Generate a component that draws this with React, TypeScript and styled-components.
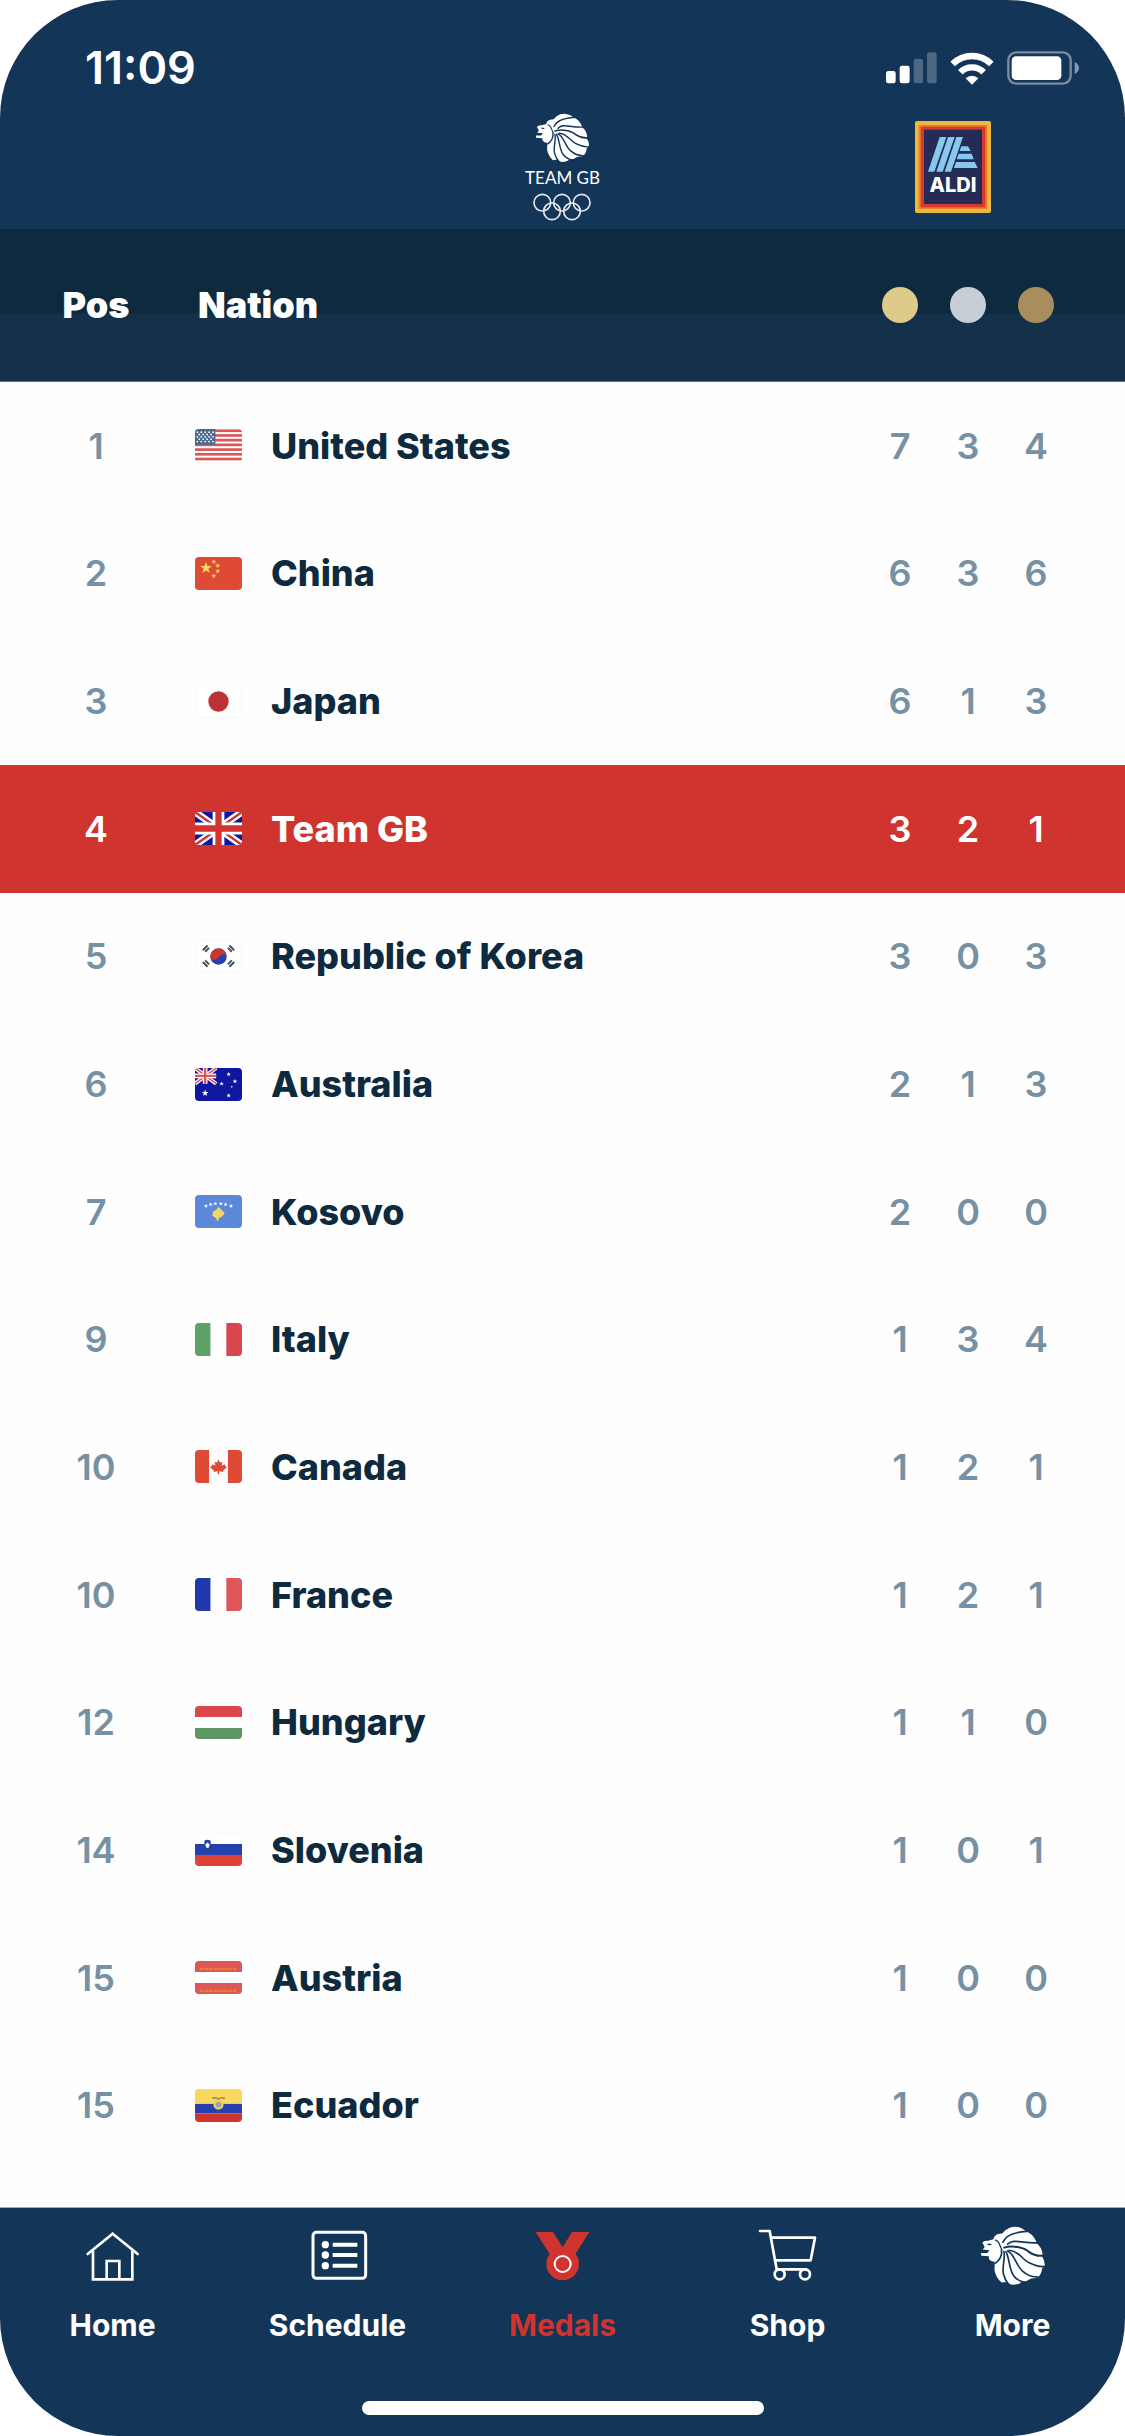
import React from "react";
import styled, { createGlobalStyle } from "styled-components";

const color = {
  navy: "#133558",
  ink: "#0d2a3f",
  inkLight: "#153149",
  slate: "#7691a3",
  red: "#d0342f",
  white: "#ffffff",
};

const GlobalStyle = createGlobalStyle`
  *, *::before, *::after { box-sizing: border-box; }
  body {
    margin: 0;
    background: ${color.white};
    font-family: Inter, "Liberation Sans", sans-serif;
  }
`;

const Screen = styled.main`
  display: flex;
  flex-direction: column;
  min-height: 100vh;
  overflow: hidden;
  border-radius: 118px;
  background: #fefefe;
`;

const TopBar = styled.header`
  background: ${color.navy};
  color: ${color.white};
`;

const StatusBar = styled.div`
  display: flex;
  align-items: center;
  justify-content: space-between;
  height: 112px;
  padding: 24px 46px 0 85px;
`;

const Clock = styled.time`
  font-size: 45px;
  line-height: 48px;
  font-weight: 600;
`;

const StatusIcons = styled.div`
  display: flex;
  align-items: center;
  gap: 13px;
`;

const BrandBar = styled.div`
  display: grid;
  grid-template-columns: 1fr auto 1fr;
  align-items: center;
  height: 117px;
  padding: 0 0 8px;
`;

const TeamLogo = styled.div`
  display: flex;
  flex-direction: column;
  align-items: center;
  grid-column: 2;
`;

const TeamName = styled.span`
  font-family: Lato, sans-serif;
  font-size: 17px;
  line-height: 30px;
`;

const SponsorLink = styled.a`
  display: block;
  justify-self: end;
  height: 92px;
  margin-right: 134px;
`;

const Table = styled.table`
  display: flex;
  flex: 1;
  flex-direction: column;
  padding-bottom: 38px;
`;

const TableHead = styled.thead`
  display: block;
  border-bottom: 1px solid #5d7183;
  background: linear-gradient(${color.ink} 56%, ${color.inkLight} 56%);
  color: ${color.white};
`;

const TableBody = styled.tbody`
  display: grid;
  flex: 1;
  grid-auto-rows: 1fr;
`;

const Row = styled.tr<{ $active?: boolean }>`
  display: grid;
  grid-template-columns: 192px 1fr repeat(3, 68px);
  align-items: center;
  min-height: 120px;
  padding-right: 55px;
  background: ${(p) => (p.$active ? color.red : "transparent")};
  color: ${(p) => (p.$active ? color.white : color.slate)};
`;

const HeadRow = styled(Row)`
  min-height: 152px;
  color: ${color.white};
`;

const Cell = styled.td`
  padding: 0;
  font-size: 36px;
  line-height: 44px;
  font-weight: 600;
  text-align: center;
`;

const NationCell = styled.th<{ $active?: boolean }>`
  display: flex;
  align-items: center;
  gap: 29px;
  padding: 0 0 0 3px;
  color: ${(p) => (p.$active ? color.white : color.ink)};
  font-size: 36px;
  line-height: 44px;
  font-weight: 800;
  text-align: left;
`;

const HeadCell = styled.th<{ $left?: boolean }>`
  padding: 0 0 0 ${(p) => (p.$left ? "6px" : "0")};
  font-size: 36px;
  line-height: 44px;
  font-weight: 900;
  text-align: ${(p) => (p.$left ? "left" : "center")};
`;

const MedalDot = styled.span<{ $fill: string }>`
  display: block;
  width: 36px;
  height: 36px;
  margin: 0 auto;
  border-radius: 50%;
  background: ${(p) => p.$fill};
`;

const FlagSvg = styled.svg`
  display: block;
  flex: none;
  width: 47px;
  height: 33px;
  border-radius: 4px;
`;

const NavBar = styled.nav`
  display: flex;
  flex-direction: column;
  align-items: center;
  justify-content: space-between;
  min-height: 229px;
  padding: 18px 0 21px;
  border-top: 1px solid #9fadba;
  background: ${color.navy};
`;

const Tabs = styled.div`
  display: grid;
  grid-template-columns: repeat(5, 1fr);
  width: 100%;
`;

const Tab = styled.a<{ $active?: boolean }>`
  display: flex;
  flex-direction: column;
  align-items: center;
  gap: 19px;
  color: ${(p) => (p.$active ? color.red : color.white)};
  font-size: 30px;
  line-height: 40px;
  font-weight: 700;
  text-decoration: none;
`;

const HomeIndicator = styled.div`
  width: 402px;
  height: 14px;
  border-radius: 7px;
  background: ${color.white};
`;

function Lion({ width, height }: { width: number; height: number }) {
  return (
    <svg width={width} height={height} viewBox="20 16 196 178" aria-hidden="true">
      <path
        fill="#fff"
        d="M27 66 Q32 58 44 60 L60 55 Q62 44 74 40 L86 38 Q94 26 110 20 Q130 15 146 24 L158 32 Q176 40 184 56 L189 68 Q202 78 206 98 L204 106 Q214 120 212 136 L204 142 Q204 158 190 170 L172 172 Q158 182 144 182 Q132 192 112 190 L98 182 L84 184 Q66 168 63 146 L64 122 Q52 122 47 114 L46 106 L24 104 L23 96 L42 96 L48 88 L28 86 L34 78 Z"
      />
      <g fill="none" stroke={color.navy} strokeLinecap="round">
        <path strokeWidth="5" d="M88 64 C96 46 122 34 160 32" />
        <path strokeWidth="5" d="M102 70 C122 52 140 68 192 66" />
        <path strokeWidth="6" d="M92 80 C120 70 156 84 164 92 C178 102 194 106 208 104" />
        <path strokeWidth="5" d="M106 88 C138 90 146 118 168 126 C184 134 200 138 212 136" />
        <path strokeWidth="5" d="M102 90 C124 100 126 132 146 150 C160 162 176 168 192 168" />
        <path strokeWidth="5" d="M97 92 C108 112 106 144 120 164 C130 176 142 182 154 184" />
        <path strokeWidth="5" d="M91 92 C96 112 84 138 90 160 C93 172 98 180 104 188" />
        <path strokeWidth="5" d="M84 86 C86 104 80 116 66 126" />
        <path strokeWidth="4" d="M66 58 C76 60 78 72 84 84" />
        <path strokeWidth="4" d="M44 70 L52 71" />
      </g>
    </svg>
  );
}

function Rings() {
  return (
    <svg width="58" height="28" viewBox="0 0 174 84" fill="none" stroke="#e6ebf0" strokeWidth="5" aria-hidden="true">
      <circle cx="28" cy="29" r="25" />
      <circle cx="87" cy="29" r="25" />
      <circle cx="146" cy="29" r="25" />
      <circle cx="57" cy="55" r="25" />
      <circle cx="117" cy="55" r="25" />
    </svg>
  );
}

function AldiLogo() {
  return (
    <svg width="76" height="92" viewBox="0 0 228 276" role="img" aria-label="ALDI">
      <rect width="228" height="276" rx="6" fill="#efb73e" />
      <rect x="11" y="12" width="206" height="252" fill="#e8812f" />
      <rect x="17" y="17" width="194" height="242" fill="#d93a2e" />
      <rect x="27" y="26" width="174" height="223" fill="#242b54" />
      <g fill="#86c8ee">
        <path d="M74 48 h20 L58 152 h-19 Z" />
        <path d="M99 48 h20 L83 152 h-19 Z" />
        <path d="M124 48 h20 L108 152 h-19 Z" />
        <path d="M139 76 h20 l8 14 h-33 Z" />
        <path d="M131 98 h39 l6 17 h-51 Z" />
        <path d="M123 123 h56 l9 18 h-71 Z" />
      </g>
      <text x="114" y="212" fill="#fff" fontFamily="Inter, sans-serif" fontSize="60" fontWeight="800" textAnchor="middle">
        ALDI
      </text>
    </svg>
  );
}

function SignalIcon() {
  return (
    <svg width="51" height="32" viewBox="0 0 153 96" fill="#fff" aria-hidden="true">
      <rect x="0" y="57" width="29" height="37" rx="7" />
      <rect x="41" y="41" width="30" height="53" rx="7" />
      <rect x="83" y="20" width="28" height="74" rx="7" opacity="0.25" />
      <rect x="123" y="1" width="29" height="93" rx="7" opacity="0.25" />
    </svg>
  );
}

function WifiIcon() {
  return (
    <svg width="44" height="33" viewBox="0 0 132 99" aria-hidden="true">
      <g fill="none" stroke="#fff" strokeWidth="19">
        <path d="M8 36 A82 82 0 0 1 124 36" />
        <path d="M31 61 A49 49 0 0 1 101 61" />
      </g>
      <path fill="#fff" d="M66 98 L47 79 A27 27 0 0 1 85 79 Z" />
    </svg>
  );
}

function BatteryIcon() {
  return (
    <svg width="72" height="34" viewBox="0 0 216 102" aria-hidden="true">
      <rect x="4" y="4" width="187" height="94" rx="24" fill="none" stroke="#7b8da2" strokeWidth="7" />
      <rect x="14" y="16" width="149" height="71" rx="13" fill="#fff" />
      <path d="M203 33 Q216 40 216 51 Q216 62 203 69 Z" fill="#8796a9" />
    </svg>
  );
}

const navIcons: Record<string, React.ReactNode> = {
  Home: (
    <g fill="none" stroke="#fff" strokeWidth="8" strokeLinecap="round">
      <path d="M20 84 L95 23 L170 84" />
      <path d="M36 74 V160 H154 V74" strokeLinecap="butt" />
      <path d="M77 160 V105 H115 V160" strokeLinecap="butt" />
    </g>
  ),
  Schedule: (
    <g fill="none" stroke="#fff">
      <rect x="21" y="19" width="158" height="138" rx="10" strokeWidth="9" />
      <path d="M80 56 H154 M80 87 H154 M80 119 H154" strokeWidth="12" />
      <g fill="#fff" stroke="none">
        <circle cx="58" cy="56" r="11" />
        <circle cx="58" cy="87" r="11" />
        <circle cx="58" cy="119" r="11" />
      </g>
    </g>
  ),
  Medals: (
    <g fill={color.red}>
      <path d="M14 18 H66 L95 64 L123 18 H175 L128 92 H61 Z" />
      <circle cx="95" cy="114" r="49" />
      <circle cx="95" cy="114" r="24" fill="none" stroke="#fff" strokeWidth="6" />
    </g>
  ),
  Shop: (
    <g fill="none" stroke="#fff" strokeWidth="8" strokeLinecap="round" strokeLinejoin="round">
      <path d="M12 15 H41 L62 130 H150" />
      <path d="M46 35 H177 L164 103 H57" />
      <circle cx="71" cy="145" r="15" />
      <circle cx="147" cy="145" r="15" />
    </g>
  ),
};

function NavIcon({ name }: { name: string }) {
  if (name === "More") return <Lion width={66} height={60} />;
  return (
    <svg width="64" height="60" viewBox="0 0 192 180" aria-hidden="true">
      {navIcons[name]}
    </svg>
  );
}

function Star({ x, y, r, fill }: { x: number; y: number; r: number; fill: string }) {
  const points = Array.from({ length: 10 }, (_, i) => {
    const angle = (Math.PI / 5) * i - Math.PI / 2;
    const radius = i % 2 ? r * 0.4 : r;
    return `${x + radius * Math.cos(angle)},${y + radius * Math.sin(angle)}`;
  });
  return <polygon points={points.join(" ")} fill={fill} />;
}

const outline = <rect x="1" y="1" width="58" height="40" rx="4" fill="#fff" stroke="#f6f6f6" strokeWidth="1" />;

const bars = (colors: string[], vertical: boolean) =>
  colors.map((fill, i) =>
    vertical ? (
      <rect key={i} x={i * 20} width="20" height="42" fill={fill} />
    ) : (
      <rect key={i} y={i * 14} width="60" height="14" fill={fill} />
    )
  );

const flags: Record<string, React.ReactNode> = {
  us: (
    <>
      <rect width="60" height="42" fill="#fff" />
      {[0, 6, 12, 18, 24, 30, 36].map((y) => (
        <rect key={y} y={y + 0.5} width="60" height="3.4" fill="#dd5658" />
      ))}
      <rect width="26" height="20" fill="#48688a" />
      {[3, 8, 13, 18, 23].map((x) =>
        [4, 10, 16].map((y) => <circle key={`${x}-${y}`} cx={x} cy={y} r="1.2" fill="#fff" />)
      )}
      {[5.5, 10.5, 15.5, 20.5].map((x) =>
        [7, 13].map((y) => <circle key={`${x}-${y}`} cx={x} cy={y} r="1.2" fill="#fff" />)
      )}
    </>
  ),
  cn: (
    <>
      <rect width="60" height="42" fill="#de4a36" />
      <Star x={14} y={14} r={8} fill="#f8d557" />
      <Star x={24} y={6} r={3.4} fill="#f8d557" />
      <Star x={29} y={11} r={3.4} fill="#f8d557" />
      <Star x={29} y={18} r={3.4} fill="#f8d557" />
      <Star x={24} y={24} r={3.4} fill="#f8d557" />
    </>
  ),
  jp: (
    <>
      {outline}
      <circle cx="30" cy="21" r="13" fill="#bb3237" />
    </>
  ),
  gb: (
    <>
      <rect width="60" height="42" fill="#0f17a0" />
      <path d="M0 0 L60 42 M60 0 L0 42" stroke="#fff" strokeWidth="9" />
      <path d="M0 0 L60 42 M60 0 L0 42" stroke="#d0342f" strokeWidth="3" />
      <path d="M30 0 V42 M0 21 H60" stroke="#fff" strokeWidth="15" />
      <path d="M30 0 V42 M0 21 H60" stroke="#d0342f" strokeWidth="8" />
    </>
  ),
  kr: (
    <>
      {outline}
      <circle cx="30" cy="21" r="10.5" fill="#2441ae" />
      <path d="M20 24 A10.5 10.5 0 1 1 40.4 19 C37 17 33 19 30 22 C27 26 22 26 20 24 Z" fill="#d0342f" />
      <g stroke="#3f4d58" strokeWidth="2.4">
        <path d="M10 13 L16 7 M13 15 L18 10" />
        <path d="M44 7 L50 13 M42 10 L47 15" />
        <path d="M10 28 L16 34 M13 26 L18 31" />
        <path d="M44 34 L50 28 M42 31 L47 26" />
      </g>
    </>
  ),
  au: (
    <>
      <rect width="60" height="42" fill="#0f17a0" />
      <path d="M0 0 L27 20 M27 0 L0 20" stroke="#fff" strokeWidth="5" />
      <path d="M0 0 L27 20 M27 0 L0 20" stroke="#dd5658" strokeWidth="2" />
      <path d="M13 0 V20 M0 10 H27" stroke="#fff" strokeWidth="6" />
      <path d="M13 0 V20 M0 10 H27" stroke="#dd5658" strokeWidth="3" />
      <Star x={13} y={32} r={4.5} fill="#fff" />
      <Star x={43} y={8} r={3} fill="#fff" />
      <Star x={34} y={20} r={3} fill="#fff" />
      <Star x={51} y={17} r={3} fill="#fff" />
      <Star x={43} y={35} r={3} fill="#fff" />
      <circle cx="47" cy="24" r="1" fill="#fff" />
    </>
  ),
  xk: (
    <>
      <rect width="60" height="42" fill="#5b88d8" />
      {[[14, 14], [20, 12], [26, 11], [33, 11], [39, 12], [46, 14]].map(([x, y]) => (
        <Star key={x} x={x} y={y} r={2.8} fill="#fff" />
      ))}
      <path d="M30 15 L34 19 L38 23 L35 27 L31 29 L29 34 L27 30 L22 26 L23 21 L27 19 Z" fill="#f4d55f" />
    </>
  ),
  it: bars(["#5ea268", "#fff", "#d9474d"], true),
  ca: (
    <>
      {outline}
      <rect width="18" height="42" fill="#de4a36" />
      <rect x="42" width="18" height="42" fill="#de4a36" />
      <path
        d="M30 12 L32 16 L35 15 L34 20 L38 18 L39 21 L41 22 L36 26 L36 28 L31 27 V31 H29 V27 L24 28 L24 26 L19 22 L21 21 L22 18 L26 20 L25 15 L28 16 Z"
        fill="#de4a36"
      />
    </>
  ),
  fr: bars(["#2039ad", "#fff", "#dd5658"], true),
  hu: bars(["#d9474d", "#fff", "#5c9665"], false),
  si: (
    <>
      {outline}
      <rect y="14" width="60" height="14" fill="#2441ae" />
      <rect y="28" width="60" height="14" fill="#de4236" />
      <path d="M12 10 Q16 7 20 10 V16 Q20 20 16 21 Q12 20 12 16 Z" fill="#2441ae" />
      <path d="M13 15 L16 12 L19 15 L17 19 H15 Z" fill="#fff" />
    </>
  ),
  at: (
    <>
      {bars(["#dd5658", "#fff", "#dd5658"], false)}
      <path d="M6 10 H54 M6 38 H54" stroke="#e8812f" strokeWidth="3" strokeDasharray="5 1" />
    </>
  ),
  ec: (
    <>
      <rect width="60" height="19" fill="#f8d75e" />
      <rect y="19" width="60" height="12" fill="#2441ae" />
      <rect y="31" width="60" height="11" fill="#d0342f" />
      <path d="M22 12 Q26 10 30 13 Q34 10 38 12" fill="none" stroke="#a08146" strokeWidth="2" />
      <circle cx="30" cy="20" r="5" fill="#8ea6b8" stroke="#f1cc52" strokeWidth="3" />
    </>
  ),
};

const medals = [
  { name: "Gold", fill: "#dccb8b" },
  { name: "Silver", fill: "#c7cfd6" },
  { name: "Bronze", fill: "#a88d5d" },
];

const standings = [
  { pos: 1, nation: "United States", flag: "us", counts: [7, 3, 4] },
  { pos: 2, nation: "China", flag: "cn", counts: [6, 3, 6] },
  { pos: 3, nation: "Japan", flag: "jp", counts: [6, 1, 3] },
  { pos: 4, nation: "Team GB", flag: "gb", counts: [3, 2, 1] },
  { pos: 5, nation: "Republic of Korea", flag: "kr", counts: [3, 0, 3] },
  { pos: 6, nation: "Australia", flag: "au", counts: [2, 1, 3] },
  { pos: 7, nation: "Kosovo", flag: "xk", counts: [2, 0, 0] },
  { pos: 9, nation: "Italy", flag: "it", counts: [1, 3, 4] },
  { pos: 10, nation: "Canada", flag: "ca", counts: [1, 2, 1] },
  { pos: 10, nation: "France", flag: "fr", counts: [1, 2, 1] },
  { pos: 12, nation: "Hungary", flag: "hu", counts: [1, 1, 0] },
  { pos: 14, nation: "Slovenia", flag: "si", counts: [1, 0, 1] },
  { pos: 15, nation: "Austria", flag: "at", counts: [1, 0, 0] },
  { pos: 15, nation: "Ecuador", flag: "ec", counts: [1, 0, 0] },
];

const tabs = ["Home", "Schedule", "Medals", "Shop", "More"];

export default function App() {
  return (
    <>
      <GlobalStyle />
      <Screen>
        <TopBar>
          <StatusBar>
            <Clock>11:09</Clock>
            <StatusIcons>
              <SignalIcon />
              <WifiIcon />
              <BatteryIcon />
            </StatusIcons>
          </StatusBar>
          <BrandBar>
            <TeamLogo>
              <Lion width={55} height={50} />
              <TeamName>TEAM GB</TeamName>
              <Rings />
            </TeamLogo>
            <SponsorLink href="#aldi">
              <AldiLogo />
            </SponsorLink>
          </BrandBar>
        </TopBar>

        <Table>
          <TableHead>
            <HeadRow>
              <HeadCell scope="col">Pos</HeadCell>
              <HeadCell scope="col" $left>
                Nation
              </HeadCell>
              {medals.map((medal) => (
                <HeadCell key={medal.name} scope="col" aria-label={medal.name}>
                  <MedalDot $fill={medal.fill} />
                </HeadCell>
              ))}
            </HeadRow>
          </TableHead>
          <TableBody>
            {standings.map((row) => {
              const active = row.flag === "gb";
              return (
                <Row key={row.nation} $active={active}>
                  <Cell>{row.pos}</Cell>
                  <NationCell scope="row" $active={active}>
                    <FlagSvg viewBox="0 0 60 42" preserveAspectRatio="none" aria-hidden="true">
                      {flags[row.flag]}
                    </FlagSvg>
                    {row.nation}
                  </NationCell>
                  {row.counts.map((count, i) => (
                    <Cell key={medals[i].name}>{count}</Cell>
                  ))}
                </Row>
              );
            })}
          </TableBody>
        </Table>

        <NavBar>
          <Tabs>
            {tabs.map((tab) => (
              <Tab
                key={tab}
                href={`#${tab.toLowerCase()}`}
                $active={tab === "Medals"}
                aria-current={tab === "Medals" ? "page" : undefined}
              >
                <NavIcon name={tab} />
                {tab}
              </Tab>
            ))}
          </Tabs>
          <HomeIndicator />
        </NavBar>
      </Screen>
    </>
  );
}
